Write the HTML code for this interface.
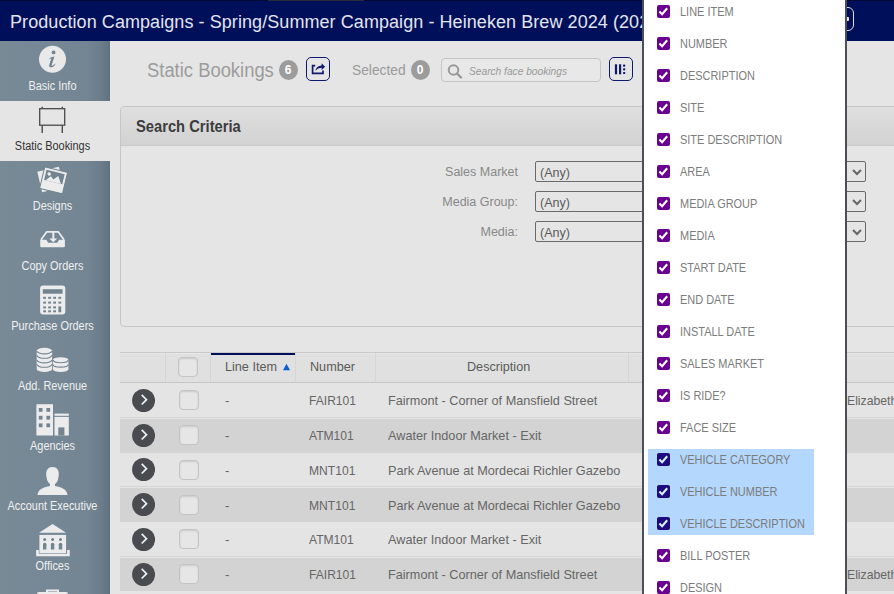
<!DOCTYPE html>
<html><head><meta charset="utf-8">
<style>
*{box-sizing:border-box;margin:0;padding:0}
html,body{width:894px;height:594px;overflow:hidden;background:#e5e5e5;font-family:"Liberation Sans",sans-serif;position:relative}
.abs{position:absolute}
#hdr{left:0;top:0;width:894px;height:41px;background:#000f5a;border-top:1px solid #000a35}
#title{left:10px;top:11px;color:#e2e5ee;font-size:18px;letter-spacing:0.07px;white-space:nowrap;line-height:22px}
#sb{left:0;top:41px;width:110px;height:553px;background:linear-gradient(to right,#798a97,#738593 80%,#6c7d8b 91%,#607180)}
.si{position:absolute;left:0;width:110px;height:60px}
.si .lb{position:absolute;left:0;width:105px;text-align:center;top:38px;font-size:12px;color:#f0f0f0;white-space:nowrap;line-height:14px;transform:scaleX(.91);transform-origin:52.5px 0}
.si svg{position:absolute;left:0;top:0}
.si.act{background:#e5e5e5}
.si.act .lb{color:#333}
/* toolbar */
.badge{position:absolute;width:19px;height:20px;border-radius:50%;background:#9c9c9c;color:#fff;font-size:12px;font-weight:bold;text-align:center;line-height:20px}
.btn{position:absolute;border:1.5px solid #0d1a6e;border-radius:5px;background:transparent}
/* panel */
#panel{left:120px;top:106px;width:790px;height:221px;border:1px solid #c6c6c6;border-radius:4px;background:#e5e5e5;overflow:hidden}
#phd{left:0;top:0;width:100%;height:39px;background:linear-gradient(#dfdfdf,#d2d2d2);border-bottom:1px solid #c8c8c8}
#phd span{position:absolute;left:15px;top:9.5px;font-size:16px;font-weight:bold;color:#3c3c3c;line-height:19px;transform:scaleX(.92);transform-origin:0 0}
.lab{position:absolute;font-size:12.5px;color:#888;text-align:right;white-space:nowrap;line-height:16px}
.sel{position:absolute;left:535px;width:331px;height:21px;border:1.5px solid #6a6a6a;border-radius:2px;background:#e5e5e5;font-size:12.5px;color:#5a5a5a;line-height:18px;padding:1.5px 0 0 4px}
/* table */
#tbl{left:120px;top:352px;width:780px}
.th{position:absolute;top:0;height:30px;border-top:1px solid #cfcfcf;border-bottom:2px solid #cfcfcf;background:#e6e6e6}
.row{position:absolute;left:0;width:780px;height:35px}
.cb{position:absolute;width:20px;height:20px;border:1.5px solid #c4c4c4;border-radius:4px;background:#e6e6e6;box-shadow:inset 0 1px 2px rgba(0,0,0,.12)}
.chev{position:absolute;left:12px;top:6px;width:23px;height:23px;border-radius:50%;background:#46474c}
.td{position:absolute;font-size:13px;color:#666;white-space:nowrap;line-height:16px}
.th2{position:absolute;top:358.5px;font-size:13.3px;color:#5a5a5a;white-space:nowrap;line-height:16px;transform:scaleX(.95);transform-origin:0 0}
/* dropdown */
#dd{left:642px;top:-10px;width:205px;height:620px;background:#fff;border-left:2px solid #4c5056;border-right:2px solid #4c5056}
.it{position:absolute;left:0;width:200px;height:32px}
.it .ck{position:absolute;left:13px;top:5px;width:13px;height:13px;border-radius:2px;background:#6a1b9a}
.it .ck svg{position:absolute;left:0;top:0}
.it .tx{position:absolute;left:36px;top:3.6px;font-size:12.9px;color:#7c7c7c;white-space:nowrap;line-height:16px;transform:scaleX(.85);transform-origin:0 0}
#hl{left:4px;width:166px;top:459px;height:86px;background:#b3d7fd}
</style></head><body>
<div id="hdr" class="abs"></div>
<div class="abs" style="left:268px;top:0;width:96px;height:1px;background:#2a2c38"></div>
<div id="title" class="abs">Production Campaigns - Spring/Summer Campaign - Heineken Brew 2024 (2024)</div>
<div class="abs" style="left:838px;top:7px;width:16px;height:24px;border:1.5px solid #e0e0e0;border-radius:6px"></div><div class="abs" style="left:846px;top:17px;width:3px;height:4px;background:#f4e8e0;border-radius:1px"></div>

<!-- sidebar -->
<div id="sb" class="abs">
  <div class="si" style="top:0">
    <svg width="110" height="40"><circle cx="52.5" cy="18.2" r="13.5" fill="#e9e9e9"/><circle cx="53.6" cy="11.4" r="1.9" fill="#728490"/><path d="M48.3 18.6 Q50.8 15.4 54.4 15.5 L51.7 24 Q51.4 25.2 52.6 24.6 L55.9 22.4 Q53.4 26.6 50.4 26.3 Q48.6 26.1 49.2 24.1 L51.3 17.6 Q50.3 17.5 48.3 18.6 Z" fill="#728490"/></svg>
    <div class="lb">Basic Info</div>
  </div>
  <div class="si act" style="top:60px">
    <svg width="110" height="40"><rect x="39.7" y="7.7" width="25" height="16.5" fill="none" stroke="#4a4a4a" stroke-width="1.3"/><path d="M42.2 5.8 V7.4 M62.3 5.8 V7.4 M42.2 24.6 V32 M62.3 24.6 V32" stroke="#4a4a4a" stroke-width="1.4" fill="none"/></svg>
    <div class="lb">Static Bookings</div>
  </div>
  <div class="si" style="top:120px">
    <svg width="110" height="40"><g transform="translate(50.5 18.4) rotate(-13.2)"><rect x="-11.1" y="-10.5" width="22.2" height="21" fill="#ececec"/></g><g transform="translate(53.6 19.4) rotate(13.6)"><rect x="-11.75" y="-11" width="23.5" height="22" fill="#ececec" stroke="#728490" stroke-width="1"/><rect x="-9.3" y="-8.6" width="18.6" height="10.4" fill="#728490"/><circle cx="-5.8" cy="-5.2" r="1.7" fill="#ececec"/><path d="M-8 1.8 L-3.5 -3.5 L-0.5 -0.8 L3.5 -5.5 L8 1.8 Z" fill="#ececec"/></g></svg>
    <div class="lb">Designs</div>
  </div>
  <div class="si" style="top:180px">
    <svg width="110" height="40"><path d="M41 18.7 L46.8 10.8 L58.2 10.8 L64 18.7" fill="none" stroke="#ececec" stroke-width="1.7" stroke-linejoin="round"/><path d="M40.2 18.7 L46.3 18.7 L48.3 21.8 L57.2 21.8 L59.2 18.7 L64.9 18.7 L64.9 25 Q64.9 26.2 63.7 26.2 L41.4 26.2 Q40.2 26.2 40.2 25 Z" fill="#ececec"/><path d="M52.3 10.5 L54.3 10.5 L54.3 17.5 L57.3 17.5 L53.3 21.2 L49.3 17.5 L52.3 17.5 Z" fill="#ececec"/></svg>
    <div class="lb">Copy Orders</div>
  </div>
  <div class="si" style="top:240px">
    <svg width="110" height="40"><rect x="40.1" y="4.5" width="25.2" height="29" rx="3" fill="#ececec"/><rect x="42.8" y="8.2" width="19.8" height="4.5" fill="#728490"/><g fill="#728490"><rect x="43.2" y="15.8" width="2.8" height="2" /><rect x="48.2" y="15.8" width="2.8" height="2" /><rect x="53.2" y="15.8" width="2.8" height="2" /><rect x="58.4" y="15.8" width="2.8" height="2" /><rect x="43.2" y="20.6" width="2.8" height="2" /><rect x="48.2" y="20.6" width="2.8" height="2" /><rect x="53.2" y="20.6" width="2.8" height="2" /><rect x="58.4" y="20.6" width="2.8" height="2" /><rect x="43.2" y="25.4" width="2.8" height="2" /><rect x="48.2" y="25.4" width="2.8" height="2" /><rect x="53.2" y="25.4" width="2.8" height="2" /><rect x="43.2" y="29.3" width="2.8" height="2" /><rect x="48.2" y="29.3" width="2.8" height="2" /><rect x="53.2" y="29.3" width="2.8" height="2" /><rect x="58.4" y="25.4" width="2.8" height="5.9"/></g></svg>
    <div class="lb">Purchase Orders</div>
  </div>
  <div class="si" style="top:300px">
    <svg width="110" height="40"><path d="M36.7 9.75 L36.7 28.0 A7.699999999999999 3.0 0 0 0 52.1 28.0 L52.1 9.75 Z" fill="#ececec"/><ellipse cx="44.400000000000006" cy="9.75" rx="7.699999999999999" ry="3.0" fill="#ececec"/><path d="M37.0 9.90 A7.3999999999999995 3.0 0 0 0 51.800000000000004 9.90" fill="none" stroke="#728490" stroke-width="1.1"/><path d="M37.0 14.30 A7.3999999999999995 3.0 0 0 0 51.800000000000004 14.30" fill="none" stroke="#728490" stroke-width="1.1"/><path d="M37.0 18.90 A7.3999999999999995 3.0 0 0 0 51.800000000000004 18.90" fill="none" stroke="#728490" stroke-width="1.1"/><path d="M37.0 23.30 A7.3999999999999995 3.0 0 0 0 51.800000000000004 23.30" fill="none" stroke="#728490" stroke-width="1.1"/><path d="M52.9 18.9 L52.9 28.3 A7.7500000000000036 2.7 0 0 0 68.4 28.3 L68.4 18.9 Z" fill="#ececec"/><ellipse cx="60.650000000000006" cy="18.9" rx="7.7500000000000036" ry="2.7" fill="#ececec"/><path d="M53.199999999999996 19.00 A7.450000000000004 2.7 0 0 0 68.10000000000001 19.00" fill="none" stroke="#728490" stroke-width="1.1"/><path d="M53.199999999999996 23.40 A7.450000000000004 2.7 0 0 0 68.10000000000001 23.40" fill="none" stroke="#728490" stroke-width="1.1"/></svg>
    <div class="lb">Add. Revenue</div>
  </div>
  <div class="si" style="top:360px">
    <svg width="110" height="40"><g fill="#ececec"><rect x="36.4" y="3.2" width="16.6" height="31.3"/><rect x="54.5" y="12.6" width="14.3" height="2.2"/><rect x="54.5" y="15.9" width="14.3" height="18.6"/></g><g fill="#728490"><rect x="38.8" y="7" width="3.7" height="3.8"/><rect x="46.4" y="7" width="3.7" height="3.8"/><rect x="38.8" y="14.8" width="3.7" height="3.8"/><rect x="46.4" y="14.8" width="3.7" height="3.8"/><rect x="38.8" y="22.4" width="3.7" height="3.8"/><rect x="46.4" y="22.4" width="3.7" height="3.8"/><rect x="58.3" y="26.4" width="6.1" height="8.1"/></g></svg>
    <div class="lb">Agencies</div>
  </div>
  <div class="si" style="top:420px">
    <svg width="110" height="40" style="top:2px"><path d="M52.5 4 C47 4 45.5 8.5 46.5 14 C47 18 48.5 20 50 21 L50 23 C44 24 38 26 37.5 32 L67.5 32 C67 26 61 24 55 23 L55 21 C56.5 20 58 18 58.5 14 C59.5 8.5 58 4 52.5 4 Z" fill="#ececec"/></svg>
    <div class="lb">Account Executive</div>
  </div>
  <div class="si" style="top:480px">
    <svg width="110" height="40"><g fill="#ececec"><path d="M52.6 2.9 L66.1 11.8 L39.1 11.8 Z"/><path d="M39.4 13.9 L66.1 13.9 L66.1 32.2 L39.4 32.2 Z"/><path d="M36.1 29 L38.8 29 L38.8 32.8 L67.1 32.8 L67.1 29 L69.8 29 L69.8 35.2 L36.1 35.2 Z"/></g><g fill="#728490"><circle cx="44.7" cy="18.6" r="1.5"/><path d="M43.0 28.6 L43.0 23.3 Q43.0 21.8 44.7 21.8 Q46.400000000000006 21.8 46.400000000000006 23.3 L46.400000000000006 28.6 Z"/><circle cx="52.6" cy="18.6" r="1.5"/><path d="M50.9 28.6 L50.9 23.3 Q50.9 21.8 52.6 21.8 Q54.300000000000004 21.8 54.300000000000004 23.3 L54.300000000000004 28.6 Z"/><circle cx="60.5" cy="18.6" r="1.5"/><path d="M58.8 28.6 L58.8 23.3 Q58.8 21.8 60.5 21.8 Q62.2 21.8 62.2 23.3 L62.2 28.6 Z"/></g></svg>
    <div class="lb">Offices</div>
  </div>
  <div class="si" style="top:540px">
    <svg width="110" height="20"><rect x="37" y="11" width="31" height="12" rx="2" fill="#ececec"/><rect x="47" y="9.5" width="11" height="5" fill="none" stroke="#ececec" stroke-width="2"/></svg>
  </div>
</div>

<!-- toolbar -->
<div class="abs" style="left:147px;top:59.3px;font-size:20px;color:#9c9c9c;line-height:22px;white-space:nowrap;transform:scaleX(.92);transform-origin:0 0">Static Bookings</div>
<div class="badge" style="left:278.5px;top:60px">6</div>
<div class="btn" style="left:306px;top:57px;width:24px;height:24px"><svg width="21" height="21" style="position:absolute;left:0;top:0"><path d="M8.2 7.6 L5.6 7.6 L5.6 15.3 L16 15.3 L16 12.6" fill="none" stroke="#0d1a6e" stroke-width="1.7"/><path d="M8.3 12.8 Q9.3 7.9 14.6 7.5 L14.6 5.2 L18.1 8.7 L14.6 12.1 L14.6 9.7 Q11 9.6 8.3 12.8 Z" fill="#0d1a6e"/></svg></div>
<div class="abs" style="left:352px;top:62px;font-size:14.5px;color:#9a9a9a;line-height:16px;white-space:nowrap;transform:scaleX(.95);transform-origin:0 0">Selected</div>
<div class="badge" style="left:410.5px;top:60px">0</div>
<div class="abs" style="left:441px;top:58px;width:160px;height:24px;border:1px solid #c4c4c4;border-radius:4px;background:#e8e8e8"></div>
<svg class="abs" style="left:445.5px;top:62.6px" width="18" height="18"><circle cx="7.5" cy="7" r="4.8" fill="none" stroke="#9a9a9a" stroke-width="2"/><line x1="11" y1="10.5" x2="15" y2="14.5" stroke="#9a9a9a" stroke-width="2.4" stroke-linecap="round"/></svg>
<div class="abs" style="left:469px;top:65px;font-size:10.2px;font-style:italic;color:#999;line-height:14px;white-space:nowrap">Search face bookings</div>
<div class="btn" style="left:609px;top:57px;width:24px;height:24px"><svg width="21" height="21" style="position:absolute;left:0;top:0"><rect x="4.9" y="6.3" width="2.2" height="10" fill="#0d1a6e"/><rect x="9" y="6.3" width="2.2" height="10" fill="#0d1a6e"/><rect x="13" y="6.6" width="2.3" height="2.2" rx="0.8" fill="#0d1a6e"/><rect x="13" y="10.2" width="2.3" height="2.2" rx="0.8" fill="#0d1a6e"/><rect x="13" y="13.9" width="2.3" height="2.2" rx="0.8" fill="#0d1a6e"/></svg></div>

<!-- panel -->
<div id="panel" class="abs">
  <div id="phd" class="abs"><span>Search Criteria</span></div>
  <div class="lab" style="top:57px;right:391px">Sales Market</div>
  <div class="lab" style="top:87px;right:391px">Media Group:</div>
  <div class="lab" style="top:117px;right:391px">Media:</div>
</div>
<div class="sel" style="top:161px">(Any)</div>
<div class="sel" style="top:191px">(Any)</div>
<div class="sel" style="top:221px">(Any)</div>
<svg class="abs" style="left:850px;top:166px" width="14" height="70"><g fill="none" stroke="#666" stroke-width="2"><path d="M3 4 L7 8 L11 4"/><path d="M3 34 L7 38 L11 34"/><path d="M3 64 L7 68 L11 64"/></g></svg>

<!-- table -->
<div class="abs" style="left:120px;top:352px;width:780px;height:31px;border-top:1px solid #c8c8c8;border-bottom:1px solid #c6c6c6;background:#e0e0e0;box-shadow:inset 0 1px 0 #e9e9e9"></div>
<div class="abs" style="left:165px;top:353px;width:1px;height:29px;background:#d6d6d6"></div>
<div class="abs" style="left:210px;top:353px;width:1px;height:29px;background:#d6d6d6"></div>
<div class="abs" style="left:295px;top:353px;width:1px;height:29px;background:#d6d6d6"></div>
<div class="abs" style="left:375px;top:353px;width:1px;height:29px;background:#d6d6d6"></div>
<div class="abs" style="left:628px;top:353px;width:1px;height:29px;background:#d6d6d6"></div>
<div class="abs" style="left:211px;top:352.7px;width:84px;height:2px;background:#000f5a"></div>
<div class="cb" style="left:178px;top:357px"></div>
<div class="th2" style="left:225px">Line Item</div>
<svg class="abs" style="left:283px;top:363px" width="8" height="8"><path d="M0 7.2 L3.5 0.8 L7 7.2 Z" fill="#0b5ed7"/></svg>
<div class="th2" style="left:310px">Number</div>
<div class="th2" style="left:467px">Description</div>
<div class="abs" style="left:120px;top:383px;width:780px;height:35px;background:#e4e4e4;border-bottom:1px solid #d6d6d6"></div>
<svg class="abs" style="left:132px;top:388.9px" width="23" height="23"><circle cx="11.6" cy="11.5" r="11.5" fill="#4a4b51"/><path d="M9.7 5.9 L14.5 10.7 L9.7 15.5" fill="none" stroke="#eef2f8" stroke-width="1.7" stroke-linejoin="miter"/></svg>
<div class="cb" style="left:179px;top:390.4px"></div>
<div class="td" style="left:225px;top:393.4px">-</div>
<div class="td" style="left:309px;top:393.4px;transform:scaleX(.93);transform-origin:0 0">FAIR101</div>
<div class="td" style="left:388px;top:393.4px;transform:scaleX(.975);transform-origin:0 0">Fairmont - Corner of Mansfield Street</div>
<div class="td" style="left:847px;top:393.4px;transform:scaleX(.94);transform-origin:0 0">Elizabeth</div>
<div class="abs" style="left:120px;top:418px;width:780px;height:35px;background:#d3d3d3;border-top:1px solid #e4e4e4"></div>
<svg class="abs" style="left:132px;top:423.6px" width="23" height="23"><circle cx="11.6" cy="11.5" r="11.5" fill="#4a4b51"/><path d="M9.7 5.9 L14.5 10.7 L9.7 15.5" fill="none" stroke="#eef2f8" stroke-width="1.7" stroke-linejoin="miter"/></svg>
<div class="cb" style="left:179px;top:425.1px"></div>
<div class="td" style="left:225px;top:428.1px">-</div>
<div class="td" style="left:309px;top:428.1px;transform:scaleX(.93);transform-origin:0 0">ATM101</div>
<div class="td" style="left:388px;top:428.1px;transform:scaleX(.975);transform-origin:0 0">Awater Indoor Market - Exit</div>
<div class="abs" style="left:120px;top:453px;width:780px;height:34px;background:#e4e4e4;border-bottom:1px solid #d6d6d6"></div>
<svg class="abs" style="left:132px;top:458.3px" width="23" height="23"><circle cx="11.6" cy="11.5" r="11.5" fill="#4a4b51"/><path d="M9.7 5.9 L14.5 10.7 L9.7 15.5" fill="none" stroke="#eef2f8" stroke-width="1.7" stroke-linejoin="miter"/></svg>
<div class="cb" style="left:179px;top:459.8px"></div>
<div class="td" style="left:225px;top:462.8px">-</div>
<div class="td" style="left:309px;top:462.8px;transform:scaleX(.93);transform-origin:0 0">MNT101</div>
<div class="td" style="left:388px;top:462.8px;transform:scaleX(.975);transform-origin:0 0">Park Avenue at Mordecai Richler Gazebo</div>
<div class="abs" style="left:120px;top:487px;width:780px;height:35px;background:#d3d3d3;border-top:1px solid #e4e4e4"></div>
<svg class="abs" style="left:132px;top:493.0px" width="23" height="23"><circle cx="11.6" cy="11.5" r="11.5" fill="#4a4b51"/><path d="M9.7 5.9 L14.5 10.7 L9.7 15.5" fill="none" stroke="#eef2f8" stroke-width="1.7" stroke-linejoin="miter"/></svg>
<div class="cb" style="left:179px;top:494.5px"></div>
<div class="td" style="left:225px;top:497.5px">-</div>
<div class="td" style="left:309px;top:497.5px;transform:scaleX(.93);transform-origin:0 0">MNT101</div>
<div class="td" style="left:388px;top:497.5px;transform:scaleX(.975);transform-origin:0 0">Park Avenue at Mordecai Richler Gazebo</div>
<div class="abs" style="left:120px;top:522px;width:780px;height:35px;background:#e4e4e4;border-bottom:1px solid #d6d6d6"></div>
<svg class="abs" style="left:132px;top:527.8px" width="23" height="23"><circle cx="11.6" cy="11.5" r="11.5" fill="#4a4b51"/><path d="M9.7 5.9 L14.5 10.7 L9.7 15.5" fill="none" stroke="#eef2f8" stroke-width="1.7" stroke-linejoin="miter"/></svg>
<div class="cb" style="left:179px;top:529.3px"></div>
<div class="td" style="left:225px;top:532.3px">-</div>
<div class="td" style="left:309px;top:532.3px;transform:scaleX(.93);transform-origin:0 0">ATM101</div>
<div class="td" style="left:388px;top:532.3px;transform:scaleX(.975);transform-origin:0 0">Awater Indoor Market - Exit</div>
<div class="abs" style="left:120px;top:557px;width:780px;height:34px;background:#d3d3d3;border-top:1px solid #e4e4e4"></div>
<svg class="abs" style="left:132px;top:562.5px" width="23" height="23"><circle cx="11.6" cy="11.5" r="11.5" fill="#4a4b51"/><path d="M9.7 5.9 L14.5 10.7 L9.7 15.5" fill="none" stroke="#eef2f8" stroke-width="1.7" stroke-linejoin="miter"/></svg>
<div class="cb" style="left:179px;top:564.0px"></div>
<div class="td" style="left:225px;top:567.0px">-</div>
<div class="td" style="left:309px;top:567.0px;transform:scaleX(.93);transform-origin:0 0">FAIR101</div>
<div class="td" style="left:388px;top:567.0px;transform:scaleX(.975);transform-origin:0 0">Fairmont - Corner of Mansfield Street</div>
<div class="td" style="left:847px;top:567.0px;transform:scaleX(.94);transform-origin:0 0">Elizabeth</div>
<!-- dropdown -->
<div id="dd" class="abs">
<div id="hl" class="abs"></div>
<div class="it" style="top:10px"><div class="ck" style="background:#6a0090"><svg width="13" height="13"><path d="M2.4 6.4 L5.1 9.2 L10.2 3.2" fill="none" stroke="#fff" stroke-width="2.1"/></svg></div><div class="tx">LINE ITEM</div></div>
<div class="it" style="top:42px"><div class="ck" style="background:#6a0090"><svg width="13" height="13"><path d="M2.4 6.4 L5.1 9.2 L10.2 3.2" fill="none" stroke="#fff" stroke-width="2.1"/></svg></div><div class="tx">NUMBER</div></div>
<div class="it" style="top:74px"><div class="ck" style="background:#6a0090"><svg width="13" height="13"><path d="M2.4 6.4 L5.1 9.2 L10.2 3.2" fill="none" stroke="#fff" stroke-width="2.1"/></svg></div><div class="tx">DESCRIPTION</div></div>
<div class="it" style="top:106px"><div class="ck" style="background:#6a0090"><svg width="13" height="13"><path d="M2.4 6.4 L5.1 9.2 L10.2 3.2" fill="none" stroke="#fff" stroke-width="2.1"/></svg></div><div class="tx">SITE</div></div>
<div class="it" style="top:138px"><div class="ck" style="background:#6a0090"><svg width="13" height="13"><path d="M2.4 6.4 L5.1 9.2 L10.2 3.2" fill="none" stroke="#fff" stroke-width="2.1"/></svg></div><div class="tx">SITE DESCRIPTION</div></div>
<div class="it" style="top:170px"><div class="ck" style="background:#6a0090"><svg width="13" height="13"><path d="M2.4 6.4 L5.1 9.2 L10.2 3.2" fill="none" stroke="#fff" stroke-width="2.1"/></svg></div><div class="tx">AREA</div></div>
<div class="it" style="top:202px"><div class="ck" style="background:#6a0090"><svg width="13" height="13"><path d="M2.4 6.4 L5.1 9.2 L10.2 3.2" fill="none" stroke="#fff" stroke-width="2.1"/></svg></div><div class="tx">MEDIA GROUP</div></div>
<div class="it" style="top:234px"><div class="ck" style="background:#6a0090"><svg width="13" height="13"><path d="M2.4 6.4 L5.1 9.2 L10.2 3.2" fill="none" stroke="#fff" stroke-width="2.1"/></svg></div><div class="tx">MEDIA</div></div>
<div class="it" style="top:266px"><div class="ck" style="background:#6a0090"><svg width="13" height="13"><path d="M2.4 6.4 L5.1 9.2 L10.2 3.2" fill="none" stroke="#fff" stroke-width="2.1"/></svg></div><div class="tx">START DATE</div></div>
<div class="it" style="top:298px"><div class="ck" style="background:#6a0090"><svg width="13" height="13"><path d="M2.4 6.4 L5.1 9.2 L10.2 3.2" fill="none" stroke="#fff" stroke-width="2.1"/></svg></div><div class="tx">END DATE</div></div>
<div class="it" style="top:330px"><div class="ck" style="background:#6a0090"><svg width="13" height="13"><path d="M2.4 6.4 L5.1 9.2 L10.2 3.2" fill="none" stroke="#fff" stroke-width="2.1"/></svg></div><div class="tx">INSTALL DATE</div></div>
<div class="it" style="top:362px"><div class="ck" style="background:#6a0090"><svg width="13" height="13"><path d="M2.4 6.4 L5.1 9.2 L10.2 3.2" fill="none" stroke="#fff" stroke-width="2.1"/></svg></div><div class="tx">SALES MARKET</div></div>
<div class="it" style="top:394px"><div class="ck" style="background:#6a0090"><svg width="13" height="13"><path d="M2.4 6.4 L5.1 9.2 L10.2 3.2" fill="none" stroke="#fff" stroke-width="2.1"/></svg></div><div class="tx">IS RIDE?</div></div>
<div class="it" style="top:426px"><div class="ck" style="background:#6a0090"><svg width="13" height="13"><path d="M2.4 6.4 L5.1 9.2 L10.2 3.2" fill="none" stroke="#fff" stroke-width="2.1"/></svg></div><div class="tx">FACE SIZE</div></div>
<div class="it" style="top:458px"><div class="ck" style="background:#200a80"><svg width="13" height="13"><path d="M2.4 6.4 L5.1 9.2 L10.2 3.2" fill="none" stroke="#d2f2fc" stroke-width="2.1"/></svg></div><div class="tx">VEHICLE CATEGORY</div></div>
<div class="it" style="top:490px"><div class="ck" style="background:#200a80"><svg width="13" height="13"><path d="M2.4 6.4 L5.1 9.2 L10.2 3.2" fill="none" stroke="#d2f2fc" stroke-width="2.1"/></svg></div><div class="tx">VEHICLE NUMBER</div></div>
<div class="it" style="top:522px"><div class="ck" style="background:#200a80"><svg width="13" height="13"><path d="M2.4 6.4 L5.1 9.2 L10.2 3.2" fill="none" stroke="#d2f2fc" stroke-width="2.1"/></svg></div><div class="tx">VEHICLE DESCRIPTION</div></div>
<div class="it" style="top:554px"><div class="ck" style="background:#6a0090"><svg width="13" height="13"><path d="M2.4 6.4 L5.1 9.2 L10.2 3.2" fill="none" stroke="#fff" stroke-width="2.1"/></svg></div><div class="tx">BILL POSTER</div></div>
<div class="it" style="top:586px"><div class="ck" style="background:#6a0090"><svg width="13" height="13"><path d="M2.4 6.4 L5.1 9.2 L10.2 3.2" fill="none" stroke="#fff" stroke-width="2.1"/></svg></div><div class="tx">DESIGN</div></div>
</div>
</body></html>
